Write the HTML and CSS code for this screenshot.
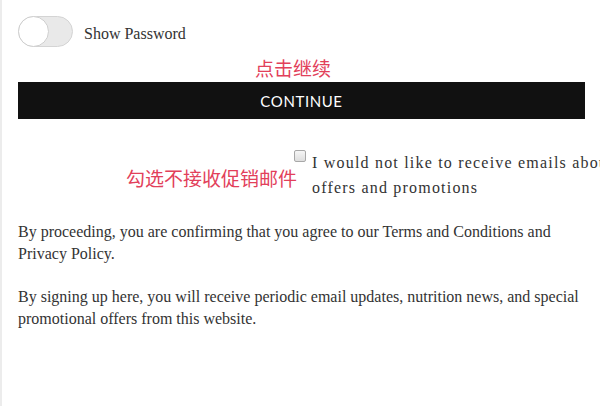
FILE: index.html
```html
<!DOCTYPE html>
<html>
<head>
<meta charset="utf-8">
<link rel="stylesheet" href="styles.css">
</head>
<body>
<div class="page">
  <div class="toggle-row">
    <span class="toggle"><span class="knob"></span></span>
    <span class="toggle-label">Show Password</span>
  </div>
  <div class="btn-wrap">
    <span class="note note-continue">点击继续</span>
    <button class="continue">CONTINUE</button>
  </div>
  <div class="optout">
    <span class="note note-optout">勾选不接收促销邮件</span>
    <span class="box"></span>
    <span class="optout-text">I would not like to receive emails about special offers and promotions</span>
  </div>
  <p class="legal">By proceeding, you are confirming that you agree to our Terms and Conditions and Privacy Policy.</p>
  <p class="legal">By signing up here, you will receive periodic email updates, nutrition news, and special promotional offers from this website.</p>
</div>
</body>
</html>
```
FILE: styles.css
```css
html, body {
  margin: 0;
  padding: 0;
  background: #fff;
  overflow: hidden;
}
body {
  width: 600px;
  height: 406px;
}
.page {
  box-sizing: border-box;
  height: 406px;
  border-left: 2px solid #ececec;
  padding: 16px 15px 0 16px;
  font-family: "Liberation Serif", "Times New Roman", serif;
  color: #333;
  font-size: 16px;
  overflow: hidden;
}
.toggle-row {
  display: flex;
  align-items: center;
  height: 31px;
}
.toggle {
  position: relative;
  box-sizing: border-box;
  width: 55px;
  height: 31px;
  border: 1px solid #d4d4d4;
  border-radius: 16px;
  background: #e9e9e9;
}
.knob {
  position: absolute;
  left: -1px;
  top: -1px;
  box-sizing: border-box;
  width: 31px;
  height: 31px;
  border-radius: 50%;
  background: #fff;
  border: 1px solid #cfcfcf;
}
.toggle-label {
  margin-left: 11px;
  margin-top: 5px;
}
.btn-wrap {
  position: relative;
  margin-top: 35px;
}
.note {
  position: absolute;
  font-family: "Noto Sans CJK SC", sans-serif;
  font-size: 19px;
  color: #e2405a;
  white-space: nowrap;
  line-height: 1;
}
.note-continue {
  left: 237px;
  top: -24px;
}
.continue {
  display: block;
  width: 567px;
  height: 37px;
  border: 0;
  margin: 0;
  padding: 0;
  background: #111;
  color: #fff;
  font-family: Lato, "Noto Sans", sans-serif;
  font-size: 15px;
  letter-spacing: 0.6px;
}
.optout {
  position: relative;
  display: flex;
  align-items: flex-start;
  margin-top: 31px;
  padding-left: 276px;
}
.note-optout {
  left: 108px;
  top: 18px;
}
.box {
  flex: none;
  box-sizing: border-box;
  width: 12px;
  height: 12px;
  border: 1px solid #a8a8a8;
  border-radius: 2px;
  background: linear-gradient(#f6f6f6, #dedede);
}
.optout-text {
  flex: none;
  width: 378px;
  margin-left: 6px;
  margin-top: 0;
  letter-spacing: 1.2px;
  line-height: 25px;
}
.legal {
  margin: 21px 0 0 0;
  line-height: 22px;
  width: 567px;
}
.legal + .legal {
  margin-top: 21px;
}
```
